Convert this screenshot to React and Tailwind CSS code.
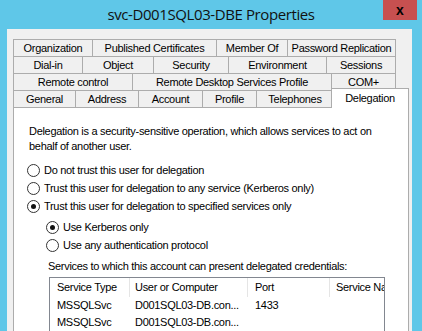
import React from "react";

const tabRows = [
  [["Organization", 79], ["Published Certificates", 124], ["Member Of", 71], ["Password Replication", 109]],
  [["Dial-in", 69], ["Object", 71], ["Security", 75], ["Environment", 98], ["Sessions", 70]],
  [["Remote control", 119], ["Remote Desktop Services Profile", 199], ["COM+", 65]],
];

const frontTabs = [["General", 62], ["Address", 63], ["Account", 64], ["Profile", 54], ["Telephones", 77]];

function Tab({ label, width, last }) {
  return (
    <div
      className={"h-[17px] flex items-center justify-center whitespace-nowrap border-t border-l border-[#acacac] bg-[#f0f0f0] " + (last ? "border-r" : "")}
      style={{ width: width }}
    >
      {label}
    </div>
  );
}

function Radio({ checked, label }) {
  return (
    <div className="flex items-center h-[18px]">
      <span className="w-[13px] h-[13px] rounded-full border border-[#333] bg-white flex items-center justify-center">
        {checked && <span className="w-[5px] h-[5px] rounded-full bg-[#111]"></span>}
      </span>
      <span className="ml-[4px]">{label}</span>
    </div>
  );
}

function ServicesTable() {
  const rows = [
    ["MSSQLSvc", "D001SQL03-DB.con...", "1433", ""],
    ["MSSQLSvc", "D001SQL03-DB.con...", "", ""],
  ];
  return (
    <div className="ml-[20px] mt-[3px] w-[336px] h-[60px] border border-[#828790] bg-white overflow-hidden">
      <div className="flex h-[19px] items-center">
        <div className="w-[80px] pl-[7px] border-r border-[#e5e5e5] h-full flex items-center">Service Type</div>
        <div className="w-[118px] pl-[5px] border-r border-[#e5e5e5] h-full flex items-center">User or Computer</div>
        <div className="w-[82px] pl-[7px] border-r border-[#e5e5e5] h-full flex items-center">Port</div>
        <div className="w-[54px] pl-[6px] h-full flex items-center whitespace-nowrap overflow-hidden">Service Name</div>
      </div>
      {rows.map((row, i) => (
        <div key={i} className="flex h-[17px] items-center">
          <div className="w-[80px] pl-[7px]">{row[0]}</div>
          <div className="w-[118px] pl-[5px] whitespace-nowrap">{row[1]}</div>
          <div className="w-[82px] pl-[7px]">{row[2]}</div>
          <div className="w-[54px] pl-[6px]">{row[3]}</div>
        </div>
      ))}
    </div>
  );
}

export default function App() {
  return (
    <div
      className="w-[422px] h-[331px] overflow-hidden bg-[#5fc7e8] flex flex-col text-black"
      style={{ fontFamily: '"Liberation Sans", Arial, sans-serif' }}
    >
      {/* title bar */}
      <div className="h-[29px] grid grid-cols-[1fr_auto_1fr] shrink-0">
        <div></div>
        <div className="text-[15px] tracking-[-0.4px] leading-[29px] text-[#111]" style={{ fontFamily: '"Open Sans", sans-serif' }}>
          svc-D001SQL03-DBE Properties
        </div>
        <div className="flex justify-end pr-[5px]">
          <div className="w-[34px] h-[20px] bg-[#c75050] flex items-center justify-center text-[14px] font-bold leading-none">
            x
          </div>
        </div>
      </div>

      {/* client area */}
      <div className="ml-[7px] mr-[10px] flex-1 bg-[#f0f0f0] pl-[6px] pt-[10px] text-[11px] tracking-[-0.3px]">
        <div className="flex flex-col">
          {tabRows.map((row, r) => (
            <div key={r} className="flex">
              {row.map((t, i) => (
                <Tab key={t[0]} label={t[0]} width={t[1]} last={i === row.length - 1} />
              ))}
            </div>
          ))}
          <div className="flex items-end h-[17px] relative z-10">
            {frontTabs.map((t) => (
              <Tab key={t[0]} label={t[0]} width={t[1]} />
            ))}
            <div className="w-[78px] h-[20px] -ml-[2px] -mb-[1px] bg-white border-t border-l border-r border-[#acacac] flex items-start justify-center pt-[1px]">
              Delegation
            </div>
          </div>
        </div>

        {/* panel */}
        <div className="w-[396px] h-[240px] bg-white border border-[#acacac] pl-[15px] pt-[16px]">
          <p className="leading-[15px] w-[362px]">
            Delegation is a security-sensitive operation, which allows services to act on behalf of another user.
          </p>
          <div className="mt-[7px] ml-[-2px]">
            <Radio label="Do not trust this user for delegation" />
            <Radio label="Trust this user for delegation to any service (Kerberos only)" />
            <Radio checked label="Trust this user for delegation to specified services only" />
          </div>
          <div className="ml-[17px] mt-[3px]">
            <Radio checked label="Use Kerberos only" />
            <Radio label="Use any authentication protocol" />
          </div>
          <div className="ml-[19px] mt-[5px] leading-[15px]">Services to which this account can present delegated credentials:</div>
          <ServicesTable />
        </div>
      </div>
    </div>
  );
}
